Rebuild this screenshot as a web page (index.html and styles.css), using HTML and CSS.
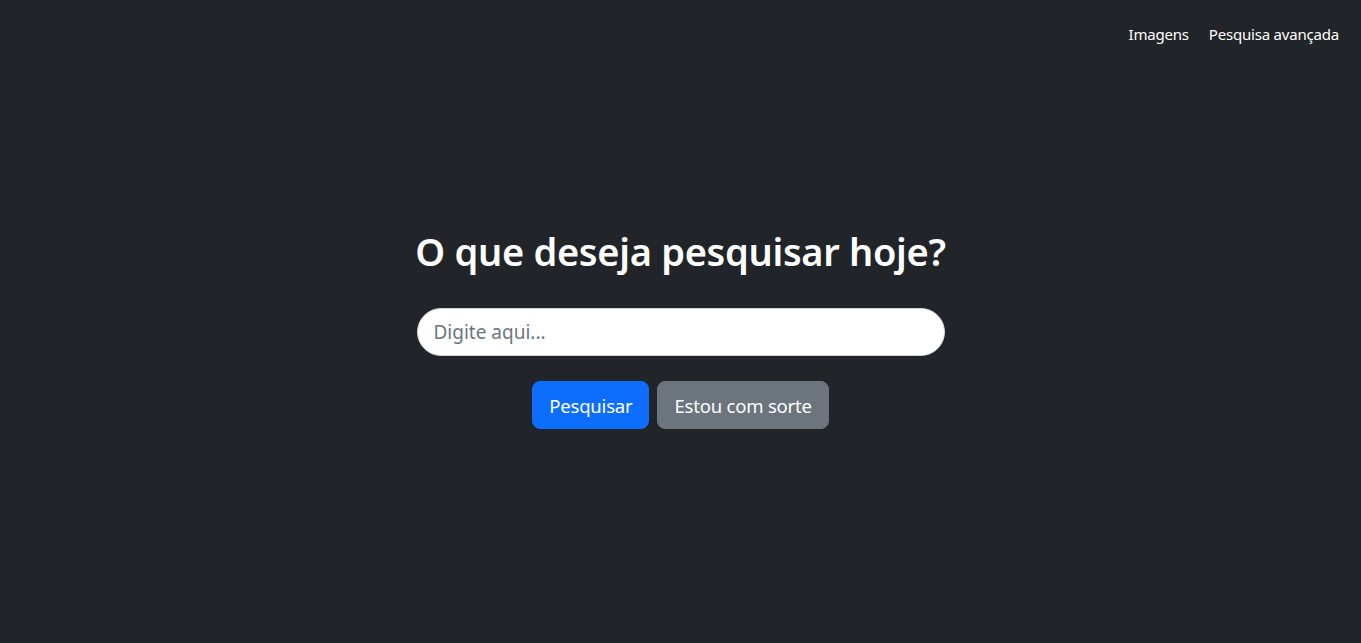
FILE: index.html
```html
<!DOCTYPE html>
<html lang="pt">
<head>
<meta charset="utf-8">
<title>Pesquisa</title>
<link rel="stylesheet" href="styles.css">
</head>
<body>
<nav class="topnav">
  <a class="nav-link" href="#">Imagens</a>
  <a class="nav-link" href="#">Pesquisa avançada</a>
</nav>
<main class="hero">
  <h1 class="title">O que deseja pesquisar hoje?</h1>
  <form class="search">
    <input class="search-input" type="text" placeholder="Digite aqui...">
    <div class="actions">
      <button class="btn btn-primary" type="button">Pesquisar</button>
      <button class="btn btn-secondary" type="button">Estou com sorte</button>
    </div>
  </form>
</main>
</body>
</html>
```
FILE: styles.css
```css
* { box-sizing: border-box; }
html, body { height: 100%; }
body {
  margin: 0;
  background: #212529;
  color: #dee2e6;
  font-family: "Noto Sans", "Open Sans", sans-serif;
}
.topnav {
  display: flex;
  justify-content: flex-end;
  padding: 22px 12px 0 0;
}
.nav-link {
  color: #ffffff;
  text-decoration: none;
  font-size: 15px;
  line-height: 24px;
  padding: 0 10px;
  letter-spacing: -0.2px;
}
.hero {
  display: flex;
  flex-direction: column;
  align-items: center;
  padding-top: 181px;
}
.title {
  margin: 0 0 33px;
  font-size: 38px;
  font-weight: 600;
  line-height: 48px;
  color: #ffffff;
  letter-spacing: -0.3px;
}
.search {
  display: flex;
  flex-direction: column;
  align-items: center;
  width: 528px;
}
.search-input {
  width: 100%;
  height: 48px;
  border: 1px solid #ced4da;
  border-radius: 24px;
  background: #ffffff;
  padding: 0 16px;
  font-family: inherit;
  font-size: 19px;
  color: #212529;
  outline: none;
}
.search-input::placeholder { color: #6c757d; opacity: 1; }
.actions {
  display: flex;
  gap: 8px;
  margin-top: 25px;
}
.btn {
  height: 48px;
  border: 1px solid transparent;
  border-radius: 8px;
  padding: 0 16px;
  font-family: inherit;
  font-size: 18.5px;
  letter-spacing: -0.2px;
  color: #ffffff;
  cursor: pointer;
}
.btn-primary { background: #0d6efd; border-color: #0d6efd; }
.btn-secondary { background: #6c757d; border-color: #6c757d; }
```
